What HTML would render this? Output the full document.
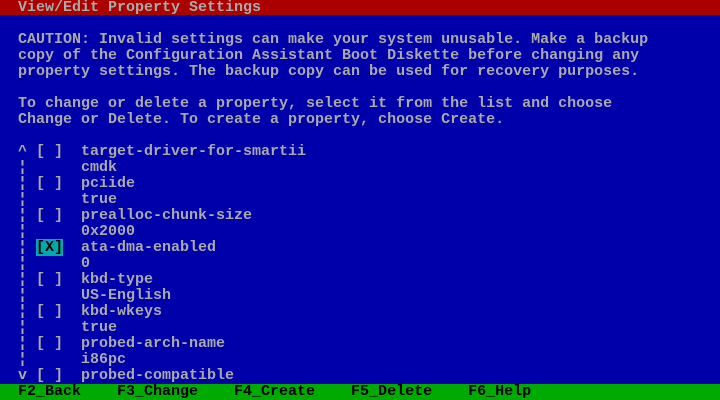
<!DOCTYPE html>
<html><head><style>
html,body{margin:0;padding:0;background:#0000aa;width:720px;height:400px;overflow:hidden}
pre{margin:0;font-family:"Liberation Mono","DejaVu Sans Mono",monospace;font-size:15px;line-height:16px;color:#aaaaaa;white-space:pre;position:absolute;left:0;top:0;font-weight:bold}
.t{position:absolute;left:0;top:0;width:720px;height:15px;background:#aa0000}
.f{position:absolute;left:0;top:384px;width:720px;height:16px;background:#00aa00}
.x{background:#00aaaa;color:#000}
.k{color:#000}
</style></head><body>
<div class="t"></div><div class="f"></div>
<pre>  View/Edit Property Settings

  CAUTION: Invalid settings can make your system unusable. Make a backup
  copy of the Configuration Assistant Boot Diskette before changing any
  property settings. The backup copy can be used for recovery purposes.

  To change or delete a property, select it from the list and choose
  Change or Delete. To create a property, choose Create.

  ^ [ ]  target-driver-for-smartii
  ¦      cmdk
  ¦ [ ]  pciide
  ¦      true
  ¦ [ ]  prealloc-chunk-size
  ¦      0x2000
  ¦ <span class="x">[X]</span>  ata-dma-enabled
  ¦      0
  ¦ [ ]  kbd-type
  ¦      US-English
  ¦ [ ]  kbd-wkeys
  ¦      true
  ¦ [ ]  probed-arch-name
  ¦      i86pc
  v [ ]  probed-compatible
<span class="k">  F2_Back    F3_Change    F4_Create    F5_Delete    F6_Help</span></pre>
</body></html>
